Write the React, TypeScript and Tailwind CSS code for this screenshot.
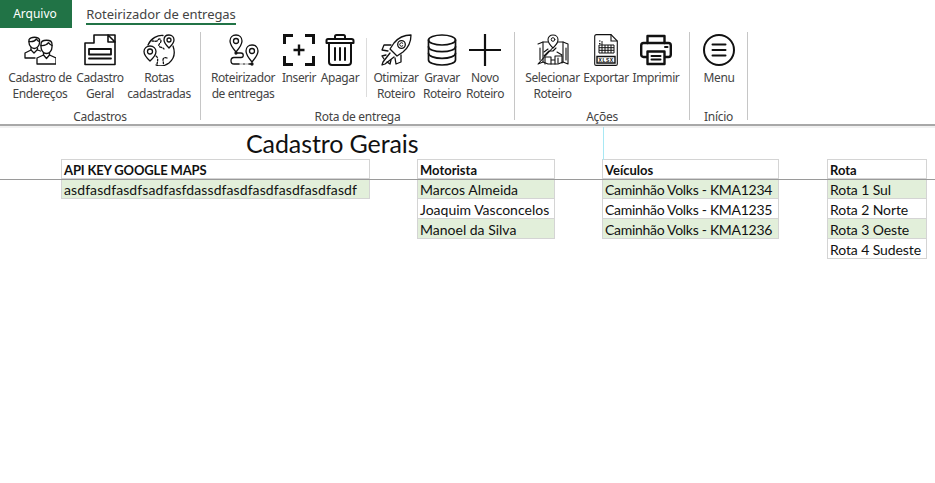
import type { ReactNode } from 'react';

function Svg({ children }: { children: ReactNode }) {
    return (
        <svg viewBox="0 0 32 32" className="h-8 w-8" fill="none" stroke="#111" strokeWidth="1.3" strokeLinecap="round" strokeLinejoin="round">
            {children}
        </svg>
    );
}

const People = () => (
    <Svg>
        <path d="M5 5.500c2-3 9-3 10.500 0v3c0 3-2.500 6-5.200 6S5 11.500 5 8.500z" />
        <path d="M5 7.500c3 .5 6-.5 7.500-2.500 .8 1.500 2 2.300 3 2.500" />
        <path d="M7 13.500v2.500l-6 3v5h10" />
        <path d="M13.500 14v2l3 1" />
        <path d="M7 16l3 3 3-3" />
        <path d="M17 10c0-5 11-5 11 0v3c0 3.500-2.500 6.500-5.500 6.500S17 16.500 17 13z" />
        <path d="M17 11.500c3 .3 6-.7 7.500-2.800 .8 1.300 2.200 2.300 3.500 2.800" />
        <path d="M19.500 18.500v2.500l-6.500 3v6h19v-6l-6.500-3v-2.500" />
        <path d="M19.500 21l3 3.500 3-3.500" />
    </Svg>
);

const DocForm = () => (
    <Svg>
        <path d="M1 9h9V1h21v29.500H1z" strokeWidth="1.600" />
        <path d="M24 1l7 7h-7z" fill="#fff" strokeWidth="1.600" />
        <rect x="5" y="15" width="22" height="5.500" strokeWidth="1.800" />
        <path d="M5 24.500h22" strokeWidth="1.800" />
    </Svg>
);

const GlobePins = () => (
    <Svg>
        <path d="M5 11C8 4 15 1 20 1.500M30 12c2.500 7 1 13-4 17-4 3-9 3.500-13 2" />
        <path d="M9 7c3 0 5 1 6-1s3-1 3 1-3 3-2 5 4 1 5 3M24 24c-2-1-4 0-4 2s1 3 0 5M13 22c2 1 2 4 1 8" strokeDasharray="2 1.500" />
        <path d="M26 1c-3 0-5 2-5 5 0 3 5 8 5 8s5-5 5-8c0-3-2-5-5-5z" fill="#fff" />
        <circle cx="26" cy="6" r="2" />
        <path d="M7 12c-3.500 0-6 2.500-6 5.500C1 21.500 7 27 7 27s6-5.500 6-9.500C13 14.500 10.500 12 7 12z" fill="#fff" />
        <circle cx="7" cy="17.500" r="2.500" />
    </Svg>
);

const RoutePins = () => (
    <Svg>
        <path d="M9 1c-3.500 0-6 2.500-6 6C3 11 9 18 9 18s6-7 6-11c0-3.500-2.500-6-6-6z" />
        <circle cx="9" cy="7" r="2.500" />
        <path d="M25 11c-3.500 0-6 2.500-6 6 0 4 6 11 6 11s6-7 6-11c0-3.500-2.500-6-6-6z" />
        <circle cx="25" cy="17" r="2.500" />
        <path d="M9 19h5c3 0 3 4.500 0 4.500H7c-4 0-4 6.500 0 6.500h18" />
        <path d="M13 30h3M18 30h3" stroke="#fff" />
        <circle cx="9" cy="19" r="1" fill="#111" />
        <circle cx="25" cy="30" r="1" fill="#111" />
    </Svg>
);

const InsertBox = () => (
    <Svg>
        <g strokeWidth="3" strokeLinecap="butt" strokeLinejoin="miter">
            <path d="M10 1.500H1.500V10M22 1.500h8.500V10M1.500 22v8.500H10M30.500 22v8.500H22" />
            <path d="M16 10.500v11M10.500 16h11" strokeWidth="2.400" />
        </g>
    </Svg>
);

const Trash = () => (
    <Svg>
        <g strokeWidth="2">
            <path d="M11 5V2.500c0-1 .5-1.500 1.500-1.500h7c1 0 1.500 .5 1.500 1.500V5" />
            <path d="M4.500 5h23c1.500 0 2 .7 2 1.700V9h-27V6.700c0-1 .5-1.700 1.500-1.700z" />
            <path d="M5 9.500V28c0 2 1 3 3 3h16c2 0 3-1 3-3V9.500" />
            <path d="M11 14v12M16 14v12M21 14v12" />
        </g>
    </Svg>
);

const Rocket = () => (
    <Svg>
        <path d="M31 1c-7 0-13 3-17 8l-4 6 7 7 6-4c5-4 8-10 8-17z" />
        <circle cx="21.500" cy="10.500" r="3.800" />
        <path d="M22.800 9.200a1.800 1.800 0 1 0 0 2.600" strokeWidth="1" />
        <path d="M11 11L4 11l-2 5 6 1M21 21v7l-5 2-1-6" />
        <path d="M10 19l-7 9-1 3 3-1 9-7" />
        <path d="M6 21l-4 1 2 3M11 26l-1 4-3-2" />
    </Svg>
);

const Database = () => (
    <Svg>
        <g strokeWidth="1.700">
            <ellipse cx="16" cy="6" rx="13.500" ry="5" />
            <path d="M2.500 6v20c0 2.800 6 5 13.500 5s13.500-2.200 13.500-5V6" />
            <path d="M2.500 12.700c0 2.800 6 5 13.500 5s13.500-2.200 13.500-5" />
            <path d="M2.500 19.300c0 2.800 6 5 13.500 5s13.500-2.200 13.500-5" />
        </g>
    </Svg>
);

const Plus = () => (
    <Svg>
        <path d="M16 0v32M0 16h32" strokeWidth="2.200" strokeLinecap="butt" />
    </Svg>
);

const MapPin = () => (
    <Svg>
        <path d="M1 10l5-2h5M21 8h5l5 2v20l-5-2-5 2H11l-5-2-5 2z" strokeWidth="1.100" />
        <path d="M6 8v20M26 8v20M3 14v12M29 14v12" strokeWidth="1.100" />
        <path d="M16 1c-3 0-5 2-5 4.700C11 9 16 14 16 14s5-5 5-8.300C21 3 19 1 16 1z" fill="#fff" strokeWidth="1.100" />
        <circle cx="16" cy="5.500" r="1.800" strokeWidth="1" />
        <path d="M7 22l5-5h4l3-3M7 18l4-3M20 18l5 3M8 30v-7h6v7M18 30v-8h7v7M14 26h4M21 24v5" strokeWidth="1.100" />
    </Svg>
);

const Xlsx = () => (
    <svg viewBox="0 0 24 32" className="h-8 w-6" fill="none" stroke="#111" strokeWidth="1.100">
        <path d="M.7 2.500Q.7 .6 2.500 .6H17l6.300 6.400V30q0 1.400-1.400 1.400H2.100Q.7 31.400 .7 30z" />
        <path d="M17 .6V7h6.300" />
        <path d="M5 7h1.500M5 9.500h1.500" strokeWidth="1" />
        <path d="M5 11h15v8H5zM5 13.700h15M5 16.300h15M8 11v8M11 11v8M14 11v8M17 11v8M8 7v4" strokeWidth="1" />
        <path d="M3 22.500h18v6.500H3z" strokeWidth="1.400" />
        <text x="12" y="27.700" textAnchor="middle" fontFamily="Liberation Mono, monospace" fontSize="5.500" fontWeight="700" fill="#111" stroke="none" letterSpacing=".4">XLSX</text>
    </svg>
);

const Printer = () => (
    <Svg>
        <g strokeWidth="2.400">
            <path d="M7.500 9V2h17v7" />
            <path d="M7 23H3.500C2 23 1.200 22 1.200 20.500V11.500C1.200 10 2 9 3.500 9h25c1.500 0 2.300 1 2.300 2.500v9c0 1.500-.8 2.500-2.300 2.500H25" />
            <path d="M7.500 17.500h17V30h-17z" />
            <path d="M11.500 22h9M11.500 25.500h9" strokeWidth="2" />
            <path d="M25 13h2.500" strokeWidth="2" />
        </g>
    </Svg>
);

const MenuIcon = () => (
    <Svg>
        <g strokeWidth="2">
            <circle cx="16" cy="16" r="15" />
            <path d="M9.500 10.500h13M9.500 16h13M9.500 21.500h13" />
        </g>
    </Svg>
);

function RibbonBtn({ w, icon, label }: { w: string; icon: ReactNode; label: ReactNode }) {
    return (
        <div className={`flex shrink-0 flex-col items-center ${w}`}>
            <div className="flex h-8 items-center justify-center">{icon}</div>
            <div className="mt-[4px] whitespace-nowrap text-center text-[12px] leading-[16px] tracking-[-0.4px] text-[#444]">{label}</div>
        </div>
    );
}

function RibbonGroup({ w, title, children }: { w: string; title: string; children: ReactNode }) {
    return (
        <div className={`flex h-[88px] shrink-0 flex-col border-r border-[#c6c6c6] ${w}`}>
            <div className="flex h-[77px] shrink-0 items-start pt-[2px]">{children}</div>
            <div className="shrink-0 text-center text-[12px] leading-[15px] tracking-[-0.3px] text-[#444]">{title}</div>
        </div>
    );
}

function Table({ w, ml, title, rows, rowCls, headCls }: { w: string; ml: string; title: string; rows: string[]; rowCls: string; headCls?: string }) {
    return (
        <div className={`shrink-0 ${w} ${ml} font-['Lato',sans-serif] text-[#111]`}>
            <div className={`h-5 border border-[#d4d4d4] bg-white pl-[2px] pt-px text-[13px] font-bold leading-[18px] ${headCls ?? ''}`}>{title}</div>
            {rows.map((r, i) => (
                <div key={r} className={`h-5 whitespace-nowrap border border-t-0 border-[#d4d4d4] pl-[2px] pt-[2px] text-[14px] leading-[17px] ${rowCls} ${i % 2 === 0 ? 'bg-[#e2efda]' : 'bg-white'}`}>
                    {r}
                </div>
            ))}
        </div>
    );
}

export default function App() {
    return (
        <div className="relative h-[483px] w-[935px] overflow-hidden bg-white font-['Noto_Sans',sans-serif]">
            <div className="flex h-7 items-start">
                <div className="flex h-7 w-[72px] items-center justify-center bg-[#217346] pr-[2px] text-[12px] text-white">Arquivo</div>
                <div className="ml-[14px] h-[25px] w-[150px] whitespace-nowrap border-b-[2px] border-[#217346] pt-[6px] text-center text-[13px] leading-[16px] tracking-[-0.05px] text-[#444]">
                    Roteirizador de entregas
                </div>
            </div>

            <div className="flex h-[96px] pt-[4px]">
                <RibbonGroup w="w-[201px]" title="Cadastros">
                    <RibbonBtn w="ml-[8px] w-[64px]" icon={<People />} label={<>Cadastro de<br />Endereços</>} />
                    <RibbonBtn w="ml-[4px] w-[48px]" icon={<DocForm />} label={<>Cadastro<br />Geral</>} />
                    <RibbonBtn w="ml-[4px] w-[62px]" icon={<GlobePins />} label={<>Rotas<br />cadastradas</>} />
                </RibbonGroup>
                <RibbonGroup w="w-[314px]" title="Rota de entrega">
                    <RibbonBtn w="ml-[10px] w-[64px]" icon={<RoutePins />} label={<>Roteirizador<br />de entregas</>} />
                    <RibbonBtn w="ml-[7px] w-[34px]" icon={<InsertBox />} label="Inserir" />
                    <RibbonBtn w="ml-[5px] w-[38px]" icon={<Trash />} label="Apagar" />
                    <div className="ml-[7px] mt-[4px] h-[59px] w-px bg-[#dcdcdc]" />
                    <RibbonBtn w="ml-[6px] w-[46px]" icon={<Rocket />} label={<>Otimizar<br />Roteiro</>} />
                    <RibbonBtn w="ml-[1px] w-[44px]" icon={<Database />} label={<>Gravar<br />Roteiro</>} />
                    <RibbonBtn w="w-[42px]" icon={<Plus />} label={<>Novo<br />Roteiro</>} />
                </RibbonGroup>
                <RibbonGroup w="w-[175px]" title="Ações">
                    <RibbonBtn w="ml-[10px] w-[55px]" icon={<MapPin />} label={<>Selecionar<br />Roteiro</>} />
                    <RibbonBtn w="ml-[3px] w-[46px]" icon={<Xlsx />} label="Exportar" />
                    <RibbonBtn w="ml-[3px] w-[48px]" icon={<Printer />} label="Imprimir" />
                </RibbonGroup>
                <RibbonGroup w="w-[58px]" title="Início">
                    <RibbonBtn w="ml-[13px] w-[32px]" icon={<MenuIcon />} label="Menu" />
                </RibbonGroup>
            </div>

            <div className="h-[2px] bg-[#a8a8a8]" />
            <div className="h-[2px] bg-[#f1f1f1]" />

            <div className="h-[31px] pl-[246px] font-['Lato',sans-serif] text-[25px] leading-[30px] tracking-[-0.1px] text-[#111]">Cadastro Gerais</div>

            <div className="flex items-start">
                <Table w="w-[309px]" ml="ml-[61px]" title="API KEY GOOGLE MAPS" headCls="tracking-[-0.15px]" rowCls="tracking-[0.09px]" rows={['asdfasdfasdfsadfasfdassdfasdfasdfasdfasdfasdf']} />
                <Table w="w-[138px]" ml="ml-[47px]" title="Motorista" rowCls="tracking-normal" rows={['Marcos Almeida', 'Joaquim Vasconcelos', 'Manoel da Silva']} />
                <Table w="w-[177px]" ml="ml-[47px]" title="Veículos" rowCls="tracking-[-0.3px]" rows={['Caminhão Volks - KMA1234', 'Caminhão Volks - KMA1235', 'Caminhão Volks - KMA1236']} />
                <Table w="w-[100px]" ml="ml-[48px]" title="Rota" rowCls="tracking-[-0.1px]" rows={['Rota 1 Sul', 'Rota 2 Norte', 'Rota 3 Oeste', 'Rota 4 Sudeste']} />
            </div>

            {/* freeze pane lines */}
            <div className="absolute left-0 right-0 top-[179px] h-px bg-[#9a9a9a]" />
            <div className="absolute left-[603px] top-[127px] h-[33px] w-px bg-[#a8e8f4]" />
        </div>
    );
}
